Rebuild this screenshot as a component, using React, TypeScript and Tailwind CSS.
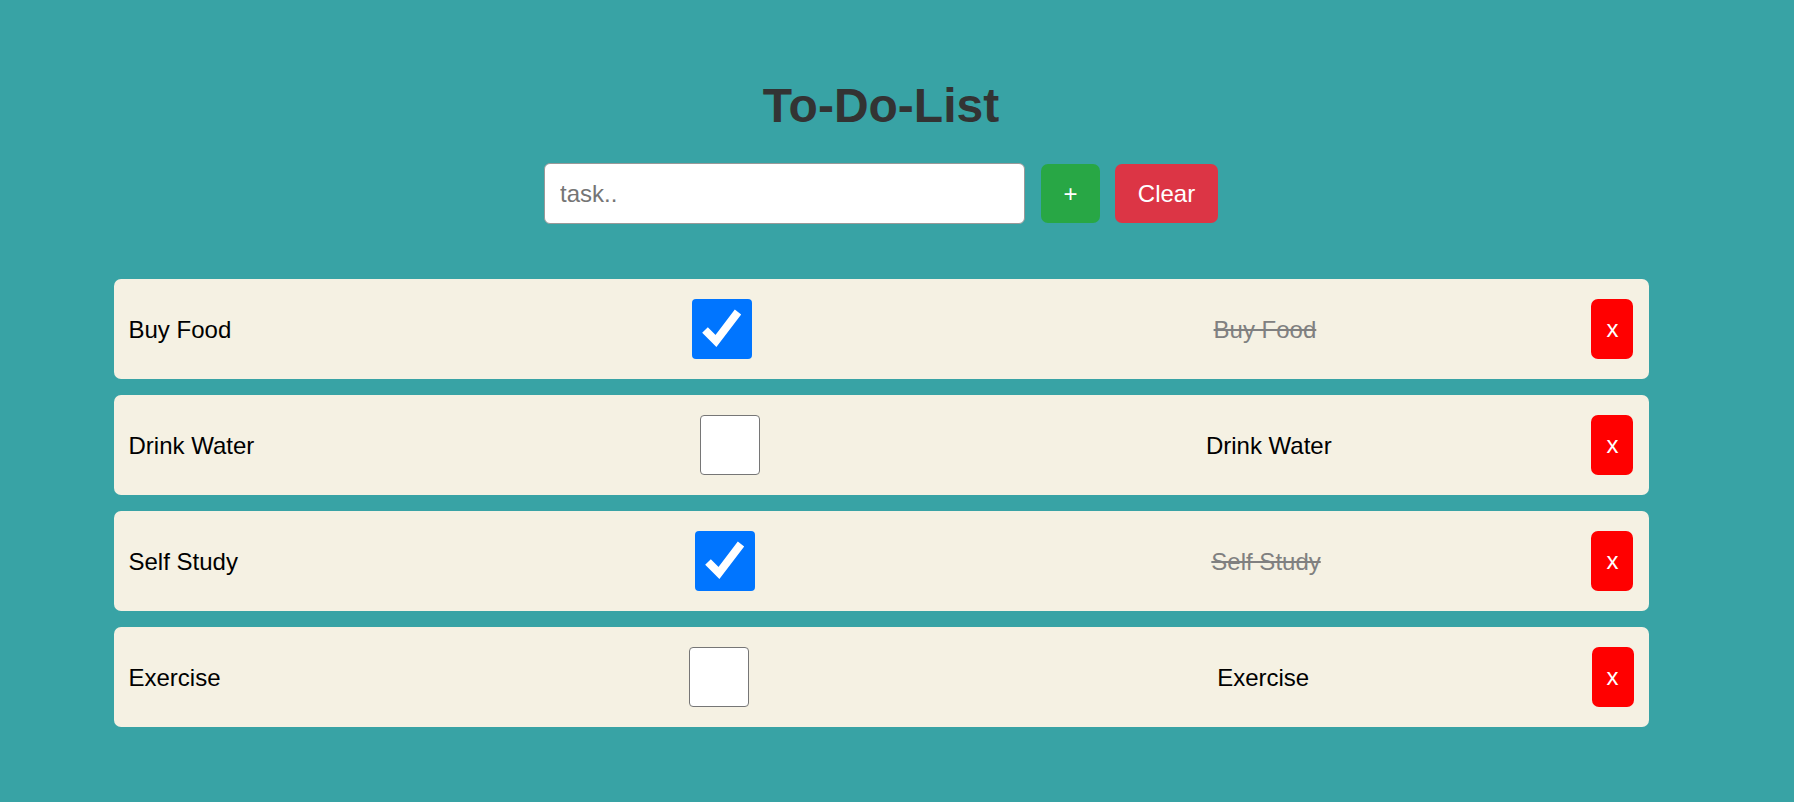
import { useState } from "react";

interface Task {
  id: number;
  text: string;
  done: boolean;
}

const initialTasks: Task[] = [
  { id: 1, text: "Buy Food", done: true },
  { id: 2, text: "Drink Water", done: false },
  { id: 3, text: "Self Study", done: true },
  { id: 4, text: "Exercise", done: false }
];

const CheckBox = ({ checked, onToggle }: { checked: boolean; onToggle: () => void }) => {
  return (
    <button
      onClick={onToggle}
      className={
        checked
          ? "flex h-[60px] w-[60px] shrink-0 items-center justify-center rounded-[4px] bg-[#0075ff]"
          : "flex h-[60px] w-[60px] shrink-0 items-center justify-center rounded-[4px] border-[1.5px] border-[#767676] bg-white"
      }
    >
      {checked && (
        <svg width="60" height="60" viewBox="0 0 60 60">
          <polyline
            points="13,31 24,42 46,13"
            fill="none"
            stroke="white"
            strokeWidth="8"
            strokeLinejoin="miter"
          />
        </svg>
      )}
    </button>
  );
};

const TodoRow = ({
  task,
  onToggle,
  onDelete
}: {
  task: Task;
  onToggle: () => void;
  onDelete: () => void;
}) => {
  return (
    <div className="flex h-[100px] w-[1535px] items-center justify-between rounded-[7px] bg-[#f5f1e3] px-[15px] text-[24px] text-black">
      <span className="shrink-0 pt-[1px]">{task.text}</span>
      <div className="mx-[186px] shrink-0">
        <CheckBox checked={task.done} onToggle={onToggle} />
      </div>
      <span className={task.done ? "shrink-0 pt-[1px] text-[#808080] line-through" : "shrink-0 pt-[1px]"}>
        {task.text}
      </span>
      <button
        onClick={onDelete}
        className="flex h-[60px] w-[42px] shrink-0 items-center justify-center rounded-[7px] bg-[#ff0000] text-[24px] text-white"
      >
        x
      </button>
    </div>
  );
};

export default function App() {
  const [tasks, setTasks] = useState<Task[]>(initialTasks);
  const [value, setValue] = useState("");

  const addTask = () => {
    if (!value.trim()) return;
    setTasks([...tasks, { id: Date.now(), text: value.trim(), done: false }]);
    setValue("");
  };

  return (
    <div
      className="min-h-screen bg-[#38a3a5] pr-[32px]"
      style={{ fontFamily: '"Liberation Sans", Arial, sans-serif' }}
    >
      <div className="flex flex-col items-center pt-[78px]">
        <h1 className="text-[48px] font-bold leading-[55px] text-[#333333]">To-Do-List</h1>

        <div className="mt-[30px] flex items-center gap-[15px]">
          <input
            value={value}
            onChange={(e) => setValue(e.target.value)}
            placeholder="task.."
            className="h-[61px] w-[481px] rounded-[6px] border border-[#999999] bg-white px-[15px] text-[24px] text-black outline-none placeholder:text-[#757575]"
          />
          <button
            onClick={addTask}
            className="ml-[1px] flex h-[59px] w-[59px] items-center justify-center rounded-[7px] bg-[#28a745] text-[24px] text-white"
          >
            +
          </button>
          <button
            onClick={() => setTasks([])}
            className="flex h-[59px] w-[103px] items-center justify-center rounded-[7px] bg-[#dc3545] text-[24px] text-white"
          >
            Clear
          </button>
        </div>

        <div className="mt-[55px] flex flex-col gap-[16px]">
          {tasks.map((task) => (
            <TodoRow
              key={task.id}
              task={task}
              onToggle={() =>
                setTasks(tasks.map((t) => (t.id === task.id ? { ...t, done: !t.done } : t)))
              }
              onDelete={() => setTasks(tasks.filter((t) => t.id !== task.id))}
            />
          ))}
        </div>
      </div>
    </div>
  );
}
